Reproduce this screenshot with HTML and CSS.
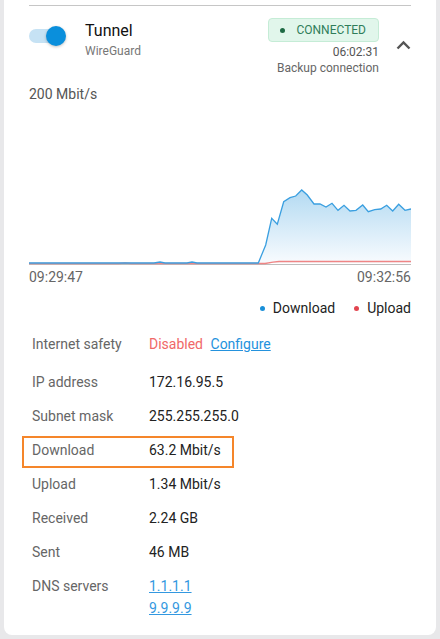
FILE: index.html
```html
<!DOCTYPE html>
<html>
<head>
<meta charset="utf-8">
<link rel="stylesheet" href="styles.css">
</head>
<body>
<div class="card">
  <div class="divider"></div>
  <div class="header">
    <div class="toggle"><span class="track"></span><span class="knob"></span></div>
    <div class="name">
      <div class="title">Tunnel</div>
      <div class="proto">WireGuard</div>
    </div>
    <div class="status">
      <span class="badge"><span class="dot"></span>CONNECTED</span>
      <div class="time">06:02:31</div>
      <div class="backup">Backup connection</div>
    </div>
    <div class="chev">
      <svg width="15" height="10" viewBox="0 0 15 10"><polyline points="1.5,8.5 7.5,2.5 13.5,8.5" fill="none" stroke="#555" stroke-width="2.4"/></svg>
    </div>
  </div>

  <div class="scale">200 Mbit/s</div>
  <svg class="chart" width="382" height="164" viewBox="0 0 382 164">
    <defs>
      <linearGradient id="g" x1="0" y1="0" x2="0" y2="1">
        <stop offset="0" stop-color="#b3daf2"/>
        <stop offset="1" stop-color="#f8fbfe"/>
      </linearGradient>
    </defs>
    <polygon fill="url(#g)" points="229.3,160 236.7,142 242.7,115.3 248.3,121.3 254.7,98.7 261,94.7 266.7,93 272.7,87 278.3,92 285,101 291,101 297,104 303,100.3 309,107.3 315,102.3 321,108 327,107.3 333.7,102 339.3,108.7 345.7,106.7 351.7,106 357.7,102.3 363.7,108 369.7,101.3 376,107.3 382,106 382,160"/>
    <line x1="0" y1="161.5" x2="382" y2="161.5" stroke="#bdbdbd" stroke-width="1.2"/>
    <polyline fill="none" stroke="#ef8585" stroke-width="1.3" points="0,160.5 90,160.5 96,160 102,160.5 236,160.5 244,159.2 250,158.5 382,158.5"/>
    <polyline fill="none" stroke="#3a9fe0" stroke-width="1.3" points="0,160 125,160 131,159 136,160 158,160 163,159 168,160 229.3,160 236.7,142 242.7,115.3 248.3,121.3 254.7,98.7 261,94.7 266.7,93 272.7,87 278.3,92 285,101 291,101 297,104 303,100.3 309,107.3 315,102.3 321,108 327,107.3 333.7,102 339.3,108.7 345.7,106.7 351.7,106 357.7,102.3 363.7,108 369.7,101.3 376,107.3 382,106"/>
  </svg>
  <div class="times"><span>09:29:47</span><span>09:32:56</span></div>
  <div class="legend">
    <span class="lg"><span class="ldot blue"></span>Download</span>
    <span class="lg"><span class="ldot red"></span>Upload</span>
  </div>

  <div class="rows">
    <div class="row first"><span class="label">Internet safety</span><span class="value"><span class="off">Disabled</span> <a class="link" href="#">Configure</a></span></div>
    <div class="row"><span class="label">IP address</span><span class="value">172.16.95.5</span></div>
    <div class="row"><span class="label">Subnet mask</span><span class="value">255.255.255.0</span></div>
    <div class="row hl"><span class="label">Download</span><span class="value">63.2 Mbit/s</span></div>
    <div class="row"><span class="label">Upload</span><span class="value">1.34 Mbit/s</span></div>
    <div class="row"><span class="label">Received</span><span class="value">2.24 GB</span></div>
    <div class="row"><span class="label">Sent</span><span class="value">46 MB</span></div>
    <div class="row"><span class="label">DNS servers</span><span class="value stack"><a class="link dns" href="#">1.1.1.1</a><a class="link dns" href="#">9.9.9.9</a></span></div>
  </div>
</div>
</body>
</html>
```

FILE: styles.css
```css
* { box-sizing: border-box; }
html, body { margin: 0; padding: 0; }
body {
  background: #e8e8ea;
  font-family: Roboto, "Liberation Sans", sans-serif;
  color: #222;
  width: 440px;
  height: 639px;
  overflow: hidden;
}
.card {
  margin: 0 4px;
  background: #fff;
  border-radius: 0 0 8px 8px;
  padding: 0 25px 10px;
}
.divider {
  padding-top: 5px;
  border-bottom: 1px solid #c6c6c6;
}
.header {
  display: flex;
  align-items: flex-start;
  padding-top: 12px;
}
.toggle {
  position: relative;
  width: 38px;
  height: 20px;
  margin-top: 8px;
  display: flex;
  align-items: center;
}
.track {
  display: block;
  width: 34px;
  height: 14px;
  border-radius: 7px;
  background: #c6e2f4;
}
.knob {
  position: absolute;
  left: 17px;
  top: 0;
  width: 20px;
  height: 20px;
  border-radius: 50%;
  background: #0a8fdc;
  box-shadow: 0 1px 3px rgba(0,0,0,0.25);
}
.name { margin-left: 18px; margin-top: 3px; }
.title { font-size: 16px; line-height: 20px; color: #111; }
.proto { font-size: 12px; line-height: 16px; color: #777; margin-top: 2px; }
.status {
  margin-left: auto;
  text-align: right;
  font-size: 12px;
  line-height: 16px;
}
.badge {
  display: inline-flex;
  align-items: center;
  height: 24px;
  padding: 0 12px 0 11px;
  background: #e1f6eb;
  border: 1px solid #c5ecd6;
  border-radius: 4px;
  color: #2f7d5a;
  font-size: 12px;
  margin-bottom: 2px;
}
.dot {
  width: 5px;
  height: 5px;
  border-radius: 50%;
  background: #1e6a44;
  margin-right: 11px;
}
.time { color: #555; }
.backup { color: #666; }
.chev {
  width: 15px;
  margin-left: 17px;
  margin-top: 22px;
}
.chev svg { display: block; }
.scale {
  margin-top: 10px;
  font-size: 14px;
  line-height: 16px;
  color: #555;
}
.chart { display: block; margin-top: 1px; }
.times {
  display: flex;
  justify-content: space-between;
  margin-top: 2px;
  font-size: 14px;
  line-height: 16px;
  color: #666;
}
.legend {
  display: flex;
  justify-content: flex-end;
  gap: 19px;
  margin-top: 13px;
  font-size: 14px;
  line-height: 20px;
  color: #222;
}
.lg { display: inline-flex; align-items: center; }
.ldot {
  width: 5px;
  height: 5px;
  border-radius: 50%;
  margin-right: 8px;
}
.ldot.blue { background: #1a8fd8; }
.ldot.red { background: #e24550; }
.rows { margin-top: 9px; }
.row {
  position: relative;
  display: flex;
  padding: 6px 0 6px 3px;
  font-size: 14px;
  line-height: 22px;
}
.row.first { margin-bottom: 4px; }
.label { width: 117px; flex: none; color: #666; }
.value { color: #222; }
.value.stack { display: flex; flex-direction: column; }
.off { color: #f06868; }
.link { color: #2492dd; text-decoration: underline; margin-left: 4px; }
.link.dns { margin-left: 0; color: #3398e0; }
.row.hl::after {
  content: "";
  position: absolute;
  left: -7px;
  top: 3px;
  width: 208px;
  height: 28px;
  border: 2px solid #f5862a;
}
```
